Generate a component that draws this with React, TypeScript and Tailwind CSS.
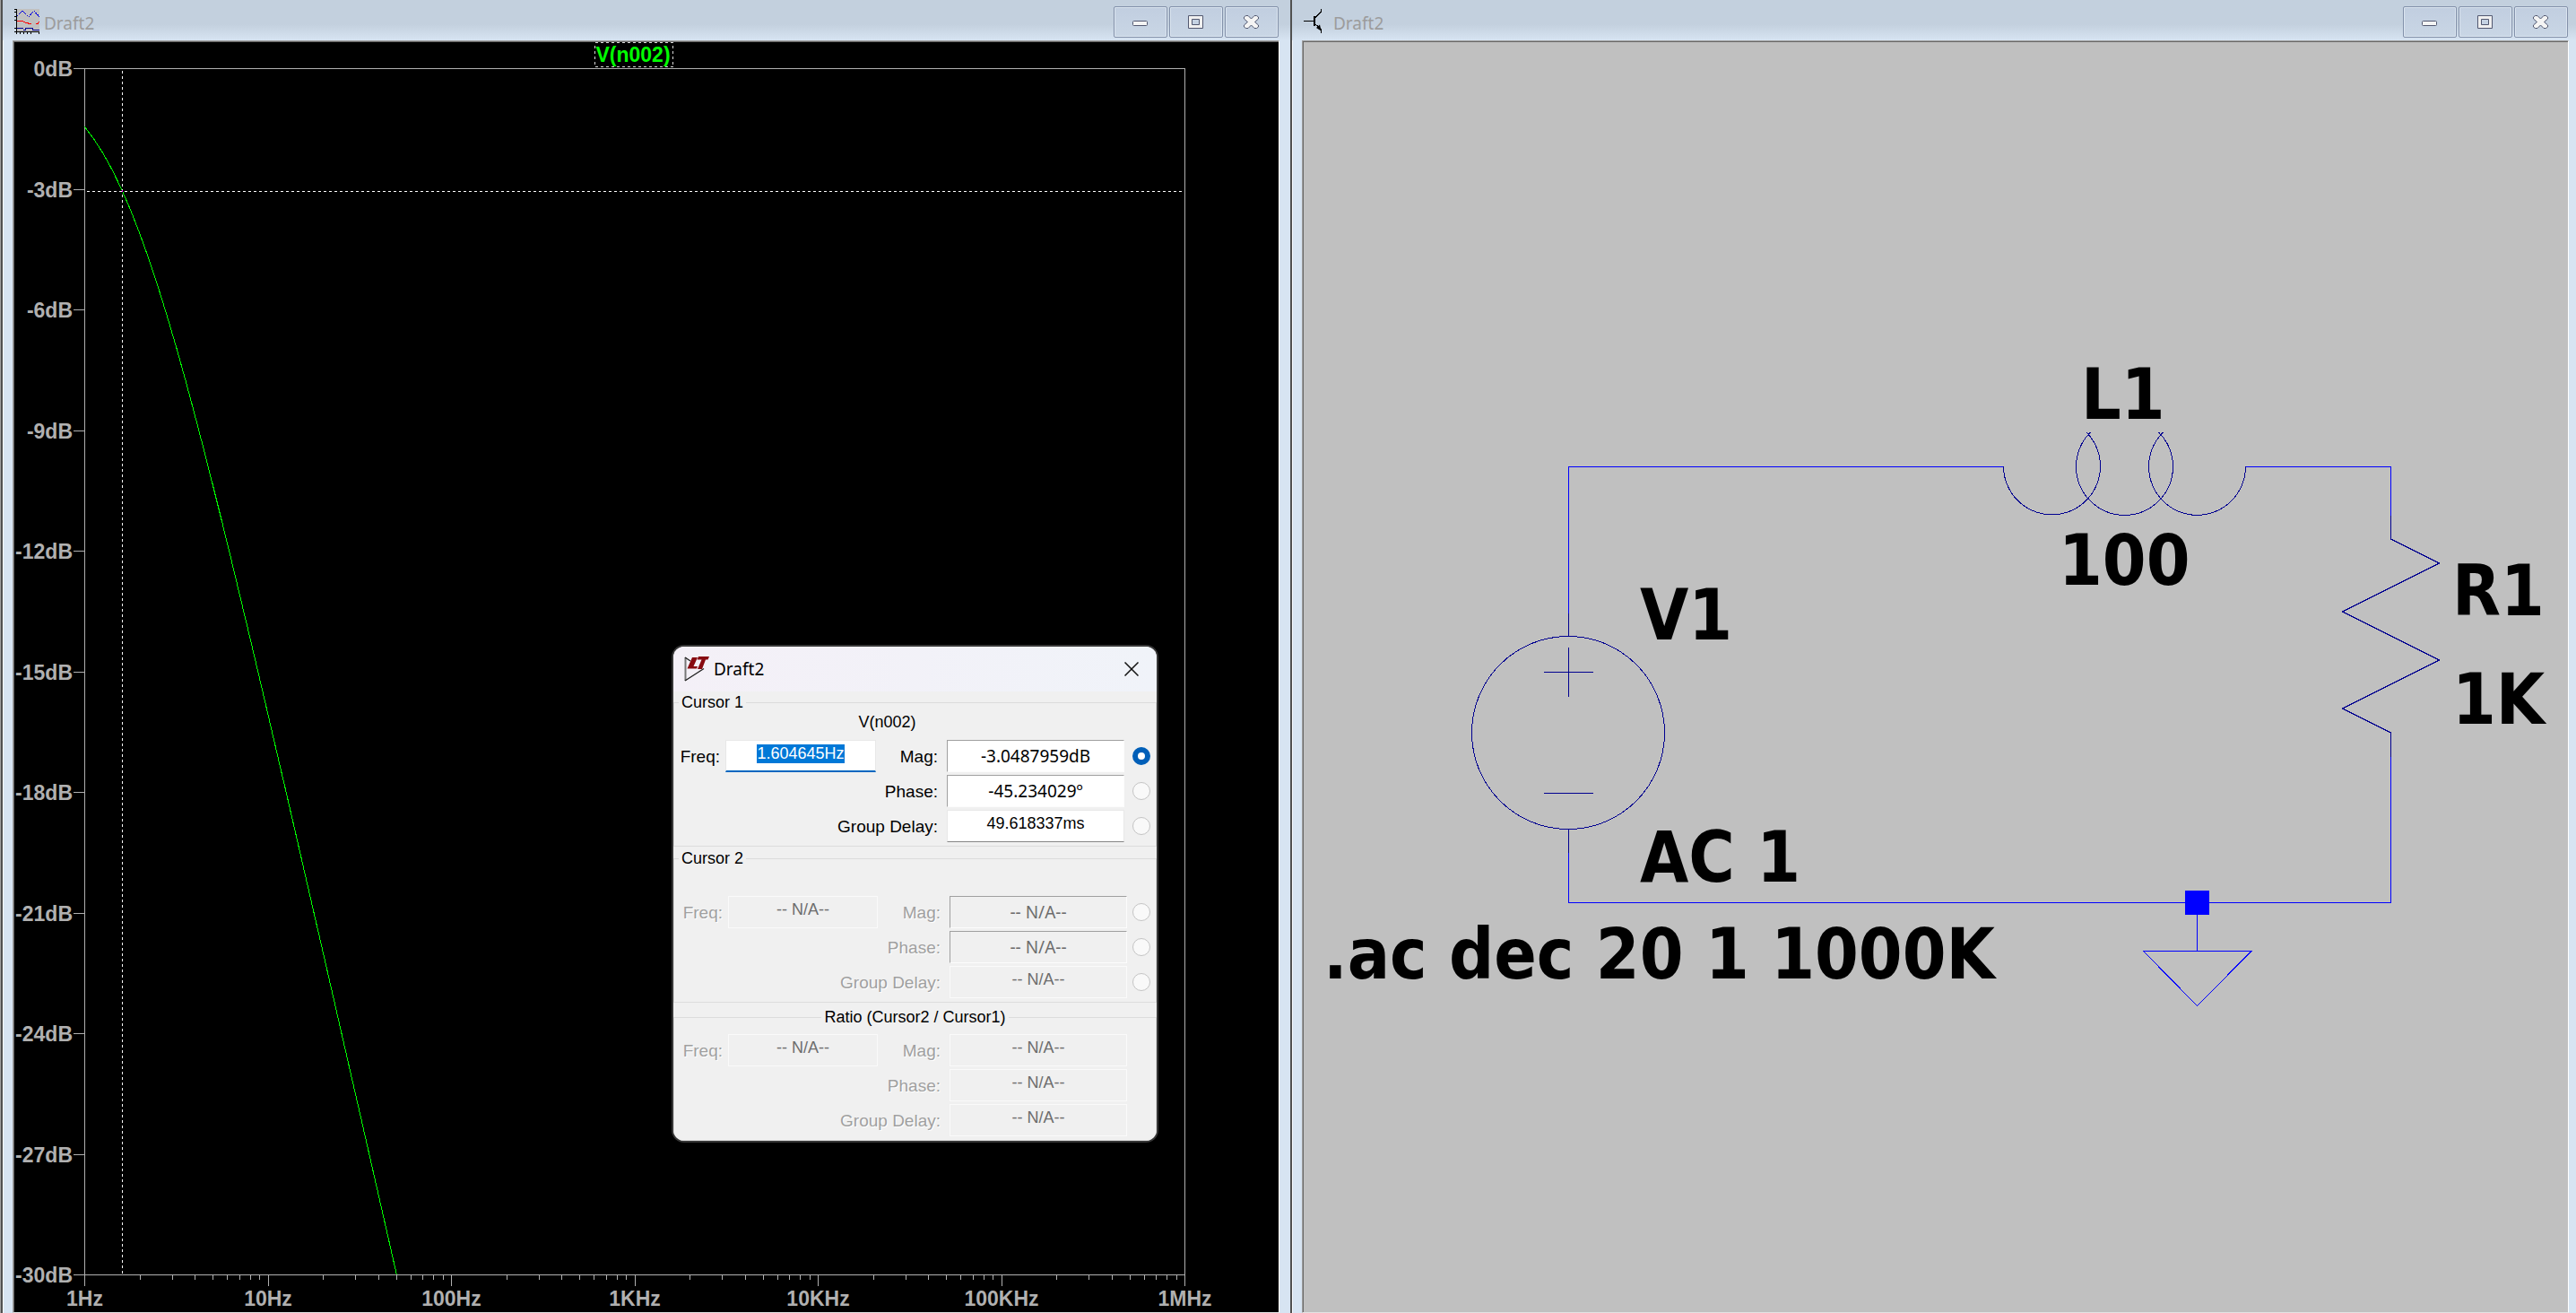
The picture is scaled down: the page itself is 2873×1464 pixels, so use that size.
import { useEffect, useRef } from "react";
import type { ReactNode } from "react";

/* ---------- icons ---------- */

function WaveformIcon() {
  return (
    <svg width="28" height="28" viewBox="0 0 28 28" shapeRendering="crispEdges" aria-hidden="true">
      <rect x="3" width="25" height="25" fill="#c0c0c0" />
      <g fill="none" strokeWidth="1">
        <path d="M3 8 L9 2 L16 9 L22 2 L28 9" stroke="#0000e0" strokeDasharray="2 1" />
        <path d="M3 13.5 H9 L13 15.5 L18 16.5 H19 M24 16.5 H26 L28 14" stroke="#ff0000" />
        <path d="M3 21.5 H10 M10 23.5 H12.5 V21.5 H20.5 V23.5 H28" stroke="#000090" />
        <path d="M2.5 0 V28 M0 25.5 H28 M0 .5 H3 M0 3.5 H3 M0 8.5 H3 M0 12.5 H3 M0 21.5 H3 M6.5 25 V28 M10.5 25 V28 M14.5 25 V28 M18.5 25 V28 M27.5 25 V28" stroke="#000" />
      </g>
    </svg>
  );
}

function TransistorIcon() {
  return (
    <svg width="28" height="28" viewBox="0 0 28 28" aria-hidden="true">
      <g fill="none" stroke="#000" strokeWidth="1.2" shapeRendering="crispEdges">
        <path d="M0 13.5 H11" />
        <path d="M11.5 8 V19" strokeWidth="2" />
        <path d="M12 10.5 L19.5 3 V0 M12 16 L19.5 23 V27" />
      </g>
      <path d="M14 21 L18 17.5 L19.5 24.5 Z" fill="#000" />
    </svg>
  );
}

function LogoIcon() {
  return (
    <svg width="28" height="28" viewBox="0 0 28 28" aria-hidden="true">
      <path d="M1.5 1 V27" stroke="#777" strokeWidth="2" />
      <path d="M1 1 L7 5 M1 27 L22 13.5" fill="none" stroke="#222" strokeWidth="1.4" />
      <path d="M9 1 H15 L10.5 11 H15 L14 13.5 H3.5 Z" fill="#870a10" />
      <path d="M16 0 H28 L26.5 3.5 H24 L20 14 H15 L19.5 3.5 H14.5 Z" fill="#870a10" />
    </svg>
  );
}

function MinimizeGlyph() {
  return (
    <svg width="20" height="18" viewBox="0 0 20 18" aria-hidden="true">
      <rect x="1.5" y="7.5" width="16" height="5" rx="1" fill="#f4f4f4" stroke="#525870" />
    </svg>
  );
}

function MaximizeGlyph() {
  return (
    <svg width="20" height="18" viewBox="0 0 20 18" aria-hidden="true">
      <path fillRule="evenodd" d="M1.5 1.5 H17.5 V15.5 H1.5 Z M5.5 5.5 V11.5 H13.5 V5.5 Z" fill="#f0f0f0" stroke="#525870" />
    </svg>
  );
}

function CloseGlyph() {
  return (
    <svg width="20" height="18" viewBox="0 0 20 18" aria-hidden="true">
      <path
        d="M1.5 3 L3.5 1.5 H6 L9.5 5 L13 1.5 H15.5 L17.5 3 V5 L13.5 8.5 L17.5 12 V14 L15.5 15.5 H13 L9.5 12 L6 15.5 H3.5 L1.5 14 V12 L5.5 8.5 L1.5 5 Z"
        fill="#f4f4f4"
        stroke="#525870"
      />
    </svg>
  );
}

/* ---------- document window ---------- */

function CaptionButton({ label, children }: { label: string; children: ReactNode }) {
  return (
    <button
      type="button"
      aria-label={label}
      className="flex h-[35px] w-[60px] items-center justify-center rounded-xs border border-[#8391aa] bg-linear-to-b from-[#c1cee0] to-[#c9d6e5] shadow-[inset_0_0_0_1px_#dbe5f0]"
    >
      {children}
    </button>
  );
}

function DocumentWindow({ icon, title, children }: { icon: ReactNode; title: string; children: ReactNode }) {
  return (
    <section className="flex min-w-0 flex-1 flex-col border-l-2 border-[#505050] bg-[#d7e4f2] shadow-[inset_1px_0_0_#f5f9fd]">
      <header className="flex h-[45px] shrink-0 items-start bg-linear-to-b from-[#c3d0de] from-60% to-[#d7e4f2] pr-[13px] pl-[13px]">
        <div className="flex flex-1 items-center gap-[5px] pt-[10px]">
          {icon}
          <h1 className="pt-[3px] text-[19px] leading-6 text-[#9c9c9c]">{title}</h1>
        </div>
        <div className="flex gap-[2px] pt-[7px]">
          <CaptionButton label="Minimize">
            <MinimizeGlyph />
          </CaptionButton>
          <CaptionButton label="Maximize">
            <MaximizeGlyph />
          </CaptionButton>
          <CaptionButton label="Close">
            <CloseGlyph />
          </CaptionButton>
        </div>
      </header>
      <div className="mr-3 ml-[11px] flex min-h-0 flex-1 border border-t-[#a0a0a0] border-r-white border-b-[#e3e3e3] border-l-[#a0a0a0]">
        <div className="min-h-0 min-w-0 flex-1 border-t border-l border-[#696969]">{children}</div>
      </div>
    </section>
  );
}

/* ---------- frequency response plot ---------- */

const X0 = 94.5;
const Y0 = 76.5;
const DECADE = 204.5;
const DB = 44.83;
const CUTOFF = 1000 / (2 * Math.PI * 100);

const freqX = (f: number) => X0 + Math.log10(f) * DECADE;
const magY = (db: number) => Y0 - db * DB;
const crisp = (v: number) => Math.floor(v + 0.1) + 0.5;

const sweep = Array.from({ length: 35 }, (_, i) => Math.pow(10, i / 20));
const response = [...sweep, 50.3]
  .map((f) => `${freqX(f).toFixed(1)},${magY(-10 * Math.log10(1 + (f / CUTOFF) ** 2)).toFixed(1)}`)
  .join(" ");

const dbLabels = [0, -3, -6, -9, -12, -15, -18, -21, -24, -27, -30];
const freqLabels = ["1Hz", "10Hz", "100Hz", "1KHz", "10KHz", "100KHz", "1MHz"];
const minorTicks = [0, 1, 2, 3, 4, 5].flatMap((d) => [2, 3, 4, 5, 6, 7, 8, 9].map((m) => freqX(m * 10 ** d)));

function FrequencyPlot() {
  return (
    <svg
      viewBox="16 47 1410 1416"
      className="block h-full w-full bg-black"
      role="img"
      aria-label="Magnitude of V(n002) against frequency"
    >
      <g stroke="#b0b0b0" fill="none" shapeRendering="crispEdges">
        <rect x="94.5" y="76.5" width="1227" height="1345" />
        {dbLabels.map((db) => (
          <path key={db} d={`M82 ${crisp(magY(db))} H94`} />
        ))}
        {freqLabels.map((label, i) => (
          <path key={label} d={`M${crisp(X0 + i * DECADE)} 1421 V1434`} />
        ))}
        {minorTicks.map((x) => (
          <path key={x} d={`M${crisp(x)} 1421 V1427`} />
        ))}
      </g>
      <g
        fill="#b0b0b0"
        className="font-['Liberation_Sans',sans-serif] text-[23px] font-bold"
      >
        {dbLabels.map((db) => (
          <text key={db} x="81" y={crisp(magY(db)) + 8.5} textAnchor="end">
            {db}dB
          </text>
        ))}
        {freqLabels.map((label, i) => (
          <text key={label} x={X0 + i * DECADE} y="1456" textAnchor="middle">
            {label}
          </text>
        ))}
        <text x="706" y="69" textAnchor="middle" fill="#00ff00">
          V(n002)
        </text>
      </g>
      <g fill="none" stroke="#fff" strokeDasharray="3 3" shapeRendering="crispEdges">
        <rect x="663.5" y="47.5" width="87" height="27" stroke="#d8d8d8" />
        <path d="M136.5 79 V1421 M97 213.5 H1321" />
      </g>
      <polyline points={response} fill="none" stroke="#00ff00" shapeRendering="crispEdges" />
      <rect x="136" y="212" width="1" height="2" fill="#ff00ff" />
    </svg>
  );
}

/* ---------- schematic ---------- */

function Schematic() {
  return (
    <svg
      viewBox="1454 47 1410 1416"
      className="block h-full w-full bg-[#c0c0c0]"
      role="img"
      aria-label="Schematic of an RL low-pass filter"
    >
      <g fill="none" stroke="#0000ff" shapeRendering="crispEdges">
        <path d="M1749.5 684 V520.5 H2235" />
        <path d="M2505 520.5 H2666.5 V575" />
        <path d="M2666.5 844 V1006.5 H1749.5 V951" />
        <path d="M2450.5 1006 V1060.5 M2390.5 1060.5 H2511 L2450.5 1121.5 Z" />
      </g>
      <rect x="2437" y="993" width="27" height="27" fill="#0000ff" />
      <g fill="none" stroke="#000090" shapeRendering="crispEdges">
        <path d="M1749.5 684 V709 M1749.5 924 V951" />
        <circle cx="1749" cy="817" r="107.5" />
        <path d="M1722 749.5 H1777 M1749.5 722 V777 M1722 884.5 H1777" />
        <path d="M2234.5 520 A54 54 0 1 0 2327 482" />
        <path d="M2331.5 482 A54 54 0 1 0 2407.5 482" />
        <path d="M2412.5 482 A54 54 0 1 0 2504.5 520" />
        <path d="M2666.5 575 V601 L2720.5 628 L2612.5 682 L2720.5 736 L2612.5 790 L2666.5 817 V844" />
      </g>
      <g className="font-['DejaVu_Sans_Condensed','DejaVu_Sans',sans-serif] text-[78px] font-bold">
        <text x="2321" y="467">L1</text>
        <text x="2296" y="652">100</text>
        <text x="2735" y="686">R1</text>
        <text x="2735" y="807">1K</text>
        <text x="1829" y="713">V1</text>
        <text x="1829" y="983">AC 1</text>
        <text x="1476" y="1091">.ac dec 20 1 1000K</text>
      </g>
    </svg>
  );
}

/* ---------- cursor readout dialog ---------- */

type Look = "sunken" | "flat";

function Field({ id, value, look, disabled }: { id: string; value: string; look: Look; disabled?: boolean }) {
  const tone = disabled ? "bg-[#f0f0f0] text-[#6d6d6d]" : "bg-white text-black";
  const frame =
    look === "sunken"
      ? "border border-t-[#a0a0a0] border-l-[#a0a0a0] border-r-[#fcfcfc] border-b-[#fcfcfc] font-['Noto_Sans',sans-serif] text-[19px]"
      : disabled
        ? "border border-[#fafafa] pb-[5px] text-[18px]"
        : "border border-[#e8e8e8] border-b-[#868686] pb-[5px] text-[18px]";
  return (
    <input
      id={id}
      readOnly
      disabled={disabled}
      defaultValue={value}
      className={`h-9 w-full min-w-0 text-center leading-6 ${tone} ${frame}`}
    />
  );
}

function FrequencyField({ id, value }: { id: string; value: string }) {
  const ref = useRef<HTMLInputElement>(null);
  useEffect(() => {
    ref.current?.focus();
    ref.current?.select();
  }, []);
  return (
    <input
      id={id}
      ref={ref}
      defaultValue={value}
      className="h-9 w-full min-w-0 border border-b-2 border-[#e8e8e8] border-b-[#0067c0] bg-white pb-[4px] text-center text-[18px] leading-6 text-black outline-none selection:bg-[#0078d7] selection:text-white"
    />
  );
}

interface Readout {
  key: string;
  legend: string;
  centered?: boolean;
  trace?: string;
  freq: string;
  rows: { label: string; value: string; look: Look }[];
  radios: boolean;
  active: boolean;
  outer: string;
  inner: string;
}

const NA = "-- N/A--";

const readouts: Readout[] = [
  {
    key: "c1",
    legend: "Cursor 1",
    trace: "V(n002)",
    freq: "1.604645Hz",
    rows: [
      { label: "Mag:", value: "-3.0487959dB", look: "sunken" },
      { label: "Phase:", value: "-45.234029º", look: "sunken" },
      { label: "Group Delay:", value: "49.618337ms", look: "flat" },
    ],
    radios: true,
    active: true,
    outer: "mt-px",
    inner: "grid-cols-[57px_168px_79px_198px_1fr]",
  },
  {
    key: "c2",
    legend: "Cursor 2",
    trace: "",
    freq: NA,
    rows: [
      { label: "Mag:", value: NA, look: "sunken" },
      { label: "Phase:", value: NA, look: "sunken" },
      { label: "Group Delay:", value: NA, look: "flat" },
    ],
    radios: true,
    active: false,
    outer: "mt-[2px]",
    inner: "grid-cols-[60px_167px_80px_198px_1fr]",
  },
  {
    key: "ratio",
    legend: "Ratio (Cursor2 / Cursor1)",
    centered: true,
    freq: NA,
    rows: [
      { label: "Mag:", value: NA, look: "flat" },
      { label: "Phase:", value: NA, look: "flat" },
      { label: "Group Delay:", value: NA, look: "flat" },
    ],
    radios: false,
    active: false,
    outer: "mt-[5px]",
    inner: "grid-cols-[60px_167px_80px_198px_1fr]",
  },
];

function ReadoutGroup({ data }: { data: Readout }) {
  const labelTone = data.active ? "text-black" : "text-[#a0a0a0] [text-shadow:1px_1px_0_#fff]";
  return (
    <fieldset className={`border border-[#dcdcdc] pb-1 ${data.outer}`}>
      <legend className={`px-[3px] text-[18px] leading-[22px] ${data.centered ? "mx-auto" : "ml-[5px]"}`}>
        {data.legend}
      </legend>
      {data.trace !== undefined && <p className="h-[22px] pr-[62px] text-center text-[18px] leading-[22px]">{data.trace}</p>}
      <div className={`grid items-center gap-y-[3px] ${data.trace === undefined ? "pt-[8px]" : "pt-[9px]"} ${data.inner}`}>
        {data.rows.map((row, i) => (
          <div key={row.label} className="contents">
            {i === 0 && (
              <>
                <label htmlFor={`${data.key}-freq`} className={`pt-[2px] pr-[6px] text-right text-[19px] leading-6 ${labelTone}`}>
                  Freq:
                </label>
                {data.active ? (
                  <FrequencyField id={`${data.key}-freq`} value={data.freq} />
                ) : (
                  <Field id={`${data.key}-freq`} value={data.freq} look="flat" disabled />
                )}
              </>
            )}
            <label
              htmlFor={`${data.key}-${i}`}
              className={`pt-[2px] pr-[10px] text-right text-[19px] leading-6 ${i === 0 ? "" : "col-span-3"} ${labelTone}`}
            >
              {row.label}
            </label>
            <Field id={`${data.key}-${i}`} value={row.value} look={row.look} disabled={!data.active} />
            {data.radios ? (
              <input
                type="radio"
                name="cursor-source"
                aria-label={`${data.legend} ${row.label}`}
                defaultChecked={data.active && i === 0}
                className="mr-[6px] size-5 appearance-none justify-self-end rounded-full border border-[#c4c4c4] bg-[#f9f9f9] checked:border-[6px] checked:border-[#005fb8] checked:bg-white"
              />
            ) : (
              <span />
            )}
          </div>
        ))}
      </div>
    </fieldset>
  );
}

function CursorDialog() {
  return (
    <div
      role="dialog"
      aria-label="Draft2"
      className="absolute top-[721px] left-[751px] w-[539px] overflow-hidden rounded-xl bg-[#f0f0f0] text-black shadow-[0_0_0_2px_#363636]"
    >
      <header className="flex h-[50px] items-center bg-linear-to-r from-[#f4f0f7] to-[#f0f3f9] pr-[14px] pl-3">
        <LogoIcon />
        <h2 className="flex-1 pl-[5px] font-['Noto_Sans',sans-serif] text-[19px] leading-6">Draft2</h2>
        <button type="button" aria-label="Close" className="flex size-7 items-center justify-center">
          <svg width="16" height="16" viewBox="0 0 16 16" aria-hidden="true">
            <path d="M.5 .5 L15.5 15.5 M15.5 .5 L.5 15.5" stroke="#111" strokeWidth="1.5" />
          </svg>
        </button>
      </header>
      {readouts.map((data) => (
        <ReadoutGroup key={data.key} data={data} />
      ))}
    </div>
  );
}

export default function App() {
  return (
    <main className="relative flex h-screen overflow-hidden bg-[#a0a0a0] font-['Liberation_Sans',sans-serif]">
      <div className="-mr-1 ml-px flex min-w-0 flex-1 font-['Noto_Sans',sans-serif]">
        <DocumentWindow icon={<WaveformIcon />} title="Draft2">
          <FrequencyPlot />
        </DocumentWindow>
        <DocumentWindow icon={<TransistorIcon />} title="Draft2">
          <Schematic />
        </DocumentWindow>
      </div>
      <CursorDialog />
    </main>
  );
}
